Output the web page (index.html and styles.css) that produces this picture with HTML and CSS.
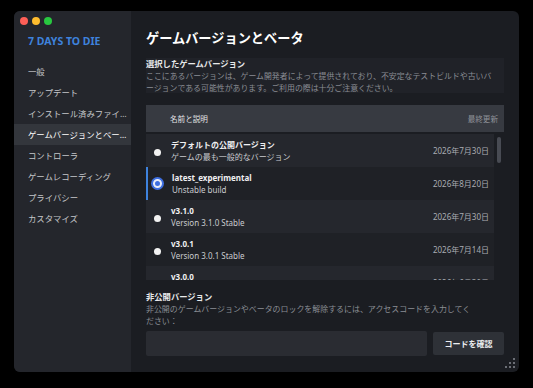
FILE: index.html
```html
<!DOCTYPE html>
<html lang="ja">
<head>
    <meta charset="UTF-8">
    <title>ゲームバージョンとベータ</title>
    <link rel="stylesheet" href="styles.css">
</head>
<body>
<div class="window">
    <div class="sidebar">
        <div class="traffic">
            <span class="light red"></span>
            <span class="light yellow"></span>
            <span class="light green"></span>
        </div>
        <div class="brand">7 DAYS TO DIE</div>
        <div class="nav">
            <div class="nav-item">一般</div>
            <div class="nav-item">アップデート</div>
            <div class="nav-item">インストール済みファイル</div>
            <div class="nav-item active">ゲームバージョンとベータ</div>
            <div class="nav-item">コントローラ</div>
            <div class="nav-item">ゲームレコーディング</div>
            <div class="nav-item">プライバシー</div>
            <div class="nav-item">カスタマイズ</div>
        </div>
    </div>

    <div class="main">
        <h1 class="title">ゲームバージョンとベータ</h1>

        <div class="section band">
            <div class="section-head">選択したゲームバージョン</div>
            <div class="section-desc wide">ここにあるバージョンは、ゲーム開発者によって提供されており、不安定なテストビルドや古いバージョンである可能性があります。ご利用の際は十分ご注意ください。</div>
        </div>

        <div class="table-head">
            <span>名前と説明</span>
            <span class="muted">最終更新</span>
        </div>

        <div class="list">
            <div class="rows">
                <div class="row">
                    <span class="radio"></span>
                    <div class="row-text">
                        <div class="row-name">デフォルトの公開バージョン</div>
                        <div class="row-sub">ゲームの最も一般的なバージョン</div>
                    </div>
                    <span class="row-date">2026年7月30日</span>
                </div>
                <div class="row selected">
                    <span class="radio on"></span>
                    <div class="row-text">
                        <div class="row-name">latest_experimental</div>
                        <div class="row-sub">Unstable build</div>
                    </div>
                    <span class="row-date">2026年8月20日</span>
                </div>
                <div class="row">
                    <span class="radio"></span>
                    <div class="row-text">
                        <div class="row-name">v3.1.0</div>
                        <div class="row-sub">Version 3.1.0 Stable</div>
                    </div>
                    <span class="row-date">2026年7月30日</span>
                </div>
                <div class="row">
                    <span class="radio"></span>
                    <div class="row-text">
                        <div class="row-name">v3.0.1</div>
                        <div class="row-sub">Version 3.0.1 Stable</div>
                    </div>
                    <span class="row-date">2026年7月14日</span>
                </div>
                <div class="row">
                    <span class="radio"></span>
                    <div class="row-text">
                        <div class="row-name">v3.0.0</div>
                    </div>
                    <span class="row-date">2026年6月30日</span>
                </div>
            </div>
            <div class="scrollbar"><div class="thumb"></div></div>
        </div>

        <div class="section private">
            <div class="section-head">非公開バージョン</div>
            <div class="section-desc narrow">非公開のゲームバージョンやベータのロックを解除するには、アクセスコードを入力してください：</div>
        </div>

        <div class="code-bar">
            <input type="text" class="code-input">
            <button class="code-btn">コードを確認</button>
        </div>

        <svg class="grip" width="10" height="10" viewBox="0 0 10 10">
            <g fill="#6b6e75">
                <rect x="8" y="0" width="2" height="2"/>
                <rect x="8" y="4" width="2" height="2"/>
                <rect x="4" y="4" width="2" height="2"/>
                <rect x="8" y="8" width="2" height="2"/>
                <rect x="4" y="8" width="2" height="2"/>
                <rect x="0" y="8" width="2" height="2"/>
            </g>
        </svg>
    </div>
</div>
</body>
</html>
```

FILE: styles.css
```css
body {
    margin: 0;
    background: #000;
    padding: 11px 14px;
    font-family: "Noto Sans", "Noto Sans CJK JP", sans-serif;
    color: #fff;
}

.window {
    width: 505px;
    height: 361px;
    display: flex;
    border-radius: 6px;
    overflow: hidden;
    background: #1b1d22;
}

/* sidebar */
.sidebar {
    width: 117px;
    flex-shrink: 0;
    background: #24262c;
    padding-top: 6px;
}

.traffic {
    display: flex;
    gap: 4px;
    padding-left: 6px;
}

.light {
    width: 8px;
    height: 8px;
    border-radius: 50%;
}
.red { background: #fe5f57; }
.yellow { background: #febc2e; }
.green { background: #28c840; }

.brand {
    margin-top: 9px;
    padding-left: 14px;
    font-size: 10.5px;
    font-weight: bold;
    line-height: 14px;
    color: #3e82dc;
}

.nav {
    margin-top: 13px;
}

.nav-item {
    padding: 0 3px 0 14px;
    font-size: 8.4px;
    line-height: 21px;
    color: #c4c6ca;
    white-space: nowrap;
    overflow: hidden;
    text-overflow: ellipsis;
}

.nav-item.active {
    background: #33363c;
    color: #fff;
}

/* main */
.main {
    flex-grow: 1;
    padding: 18px 15px 0;
    display: flex;
    flex-direction: column;
    position: relative;
}

.title {
    margin: 0;
    font-size: 13.2px;
    line-height: 18px;
    font-weight: bold;
}

.section-head {
    font-size: 8.3px;
    font-weight: bold;
    line-height: 12px;
    color: #e8e9eb;
}

.section-desc {
    font-size: 7.95px;
    line-height: 12px;
    color: #8a8d94;
    line-break: anywhere;
}

.section-desc.wide {
    font-size: 7.9px;
    padding-right: 10px;
}

.section-desc.narrow {
    padding-right: 26px;
}

.band {
    margin-top: 11px;
    background: #202228;
    height: 35px;
}

.table-head {
    margin-top: 12px;
    height: 27px;
    background: #373a41;
    display: flex;
    align-items: center;
    justify-content: space-between;
    padding: 0 6px 0 24px;
    font-size: 7.6px;
    color: #e2e3e6;
}

.muted {
    color: #8f9299;
}

.list {
    margin-top: 2px;
    height: 146px;
    overflow: hidden;
    display: flex;
}

.rows {
    flex-grow: 1;
}

.row {
    height: 33px;
    display: flex;
    align-items: flex-start;
    padding: 5px 5px 0 0;
    box-sizing: border-box;
    background: #25272d;
    position: relative;
}

.row:nth-child(even) {
    background: #1f2126;
}

.row.selected::before {
    content: "";
    position: absolute;
    left: 0;
    top: 0;
    bottom: 0;
    width: 2px;
    background: #3e82dc;
}

.radio {
    width: 7px;
    height: 7px;
    border-radius: 50%;
    background: #f2f2f2;
    margin: 10px 0 0 8px;
    flex-shrink: 0;
}

.radio.on {
    width: 5px;
    height: 5px;
    background: #3e6fe0;
    border: 2px solid #e9edf8;
    box-shadow: 0 0 0 2px #3e6fe0;
    margin: 7px 0 0 7px;
    box-sizing: content-box;
}

.row-text {
    flex-grow: 1;
    margin-left: 10px;
}

.row-name {
    font-size: 8px;
    font-weight: bold;
    line-height: 12px;
    color: #f0f0f2;
}

.row-sub {
    font-size: 8px;
    line-height: 11px;
    color: #c9cbcf;
}

.row-date {
    font-size: 8px;
    line-height: 12px;
    margin-top: 6px;
    color: #a9acb2;
}

.scrollbar {
    width: 10px;
    flex-shrink: 0;
}

.thumb {
    width: 4px;
    height: 26px;
    margin: 3px 0 0 3px;
    border-radius: 2px;
    background: #484b53;
}

.private {
    margin-top: 11px;
}

.code-bar {
    margin-top: 4px;
    display: flex;
    gap: 6px;
    align-items: center;
}

.code-input {
    flex-grow: 1;
    height: 25px;
    box-sizing: border-box;
    background: #2a2c32;
    border: none;
    border-radius: 2px;
}

.code-btn {
    width: 71px;
    height: 23px;
    background: #2e3137;
    border: none;
    border-radius: 2px;
    color: #eceef1;
    font-family: "Noto Sans", "Noto Sans CJK JP", sans-serif;
    font-size: 8px;
    font-weight: bold;
}

.grip {
    position: absolute;
    right: 4px;
    bottom: 4px;
}
```
